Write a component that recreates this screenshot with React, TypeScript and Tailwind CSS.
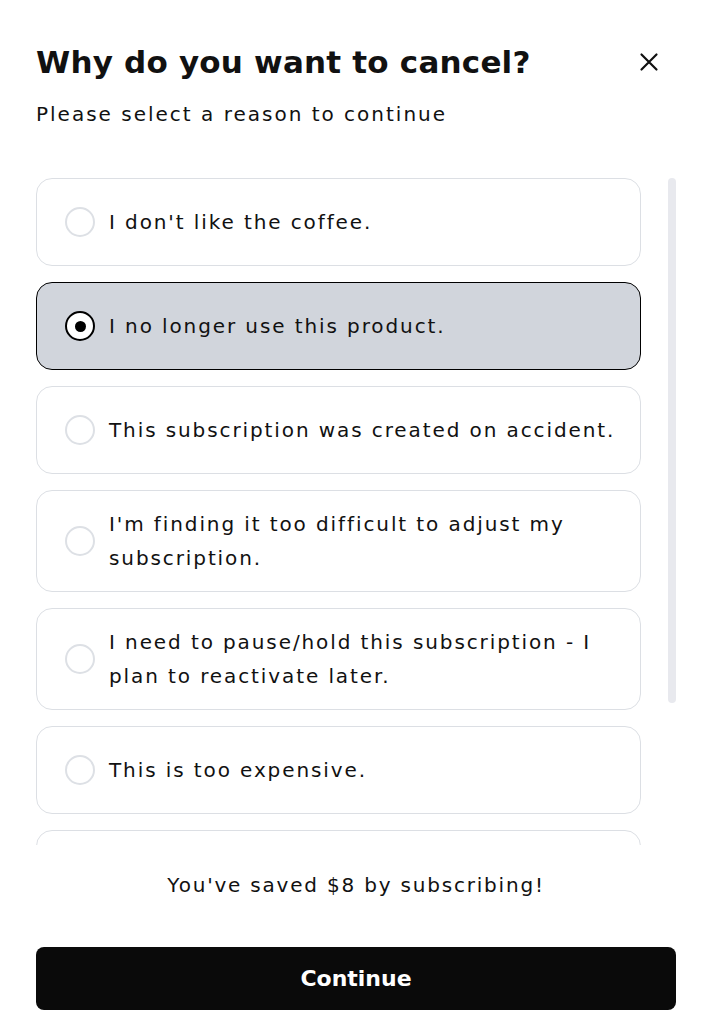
import { useState } from "react";

const reasons = [
  "I don't like the coffee.",
  "I no longer use this product.",
  "This subscription was created on accident.",
  "I'm finding it too difficult to adjust my subscription.",
  "I need to pause/hold this subscription - I plan to reactivate later.",
  "This is too expensive.",
  "I'm moving to a different address.",
  "Other",
];

function Radio({ checked }: { checked: boolean }) {
  if (checked) {
    return (
      <span className="flex h-[30px] w-[30px] shrink-0 items-center justify-center rounded-full border-2 border-black bg-white">
        <span className="h-[11px] w-[11px] rounded-full bg-black" />
      </span>
    );
  }
  return <span className="h-[30px] w-[30px] shrink-0 rounded-full border-2 border-[#dde0e5] bg-white" />;
}

export default function App() {
  const [selected, setSelected] = useState(1);

  return (
    <div
      className="flex h-[1028px] w-[708px] flex-col bg-white pr-8 pl-9 text-[#111]"
      style={{ fontFamily: '"DejaVu Sans", sans-serif' }}
    >
      <div className="flex items-center justify-between pt-[40px]">
        <h1 className="text-[31px] leading-[44px] font-bold tracking-[0.2px]">Why do you want to cancel?</h1>
        <button className="mr-[17px] flex h-[20px] w-[20px] items-center justify-center" aria-label="Close">
          <svg width="20" height="20" viewBox="0 0 20 20" fill="none" stroke="#111" strokeWidth="2.2" strokeLinecap="round">
            <path d="M2.5 2.5L17.5 17.5M17.5 2.5L2.5 17.5" />
          </svg>
        </button>
      </div>
      <p className="mt-[15px] text-[20px] leading-[30px] tracking-[2px]">Please select a reason to continue</p>

      <div className="mt-[49px] flex h-[667px] gap-[27px] overflow-hidden">
        <div className="flex flex-1 flex-col gap-4 overflow-hidden">
          {reasons.map((r, i) => {
            const on = i === selected;
            return (
              <button
                key={r}
                onClick={() => setSelected(i)}
                className={
                  "flex min-h-[88px] shrink-0 items-center gap-[14px] rounded-2xl border py-4 pr-4 pl-[28px] text-left " +
                  (on ? "border-black bg-[#d1d5dc]" : "border-[#dcdfe4] bg-white")
                }
              >
                <Radio checked={on} />
                <span className="text-[20px] leading-[34px] tracking-[1.9px]">{r}</span>
              </button>
            );
          })}
        </div>
        <div className="w-2 shrink-0">
          <div className="h-[525px] w-2 rounded-full bg-[#e8e9ee]" />
        </div>
      </div>

      <p className="mt-[25px] text-center text-[20px] leading-[30px] tracking-[1.8px]">You've saved $8 by subscribing!</p>

      <button className="mt-[47px] h-[63px] w-full rounded-lg bg-[#0a0a0a] text-[22px] font-semibold text-white">
        Continue
      </button>
    </div>
  );
}
